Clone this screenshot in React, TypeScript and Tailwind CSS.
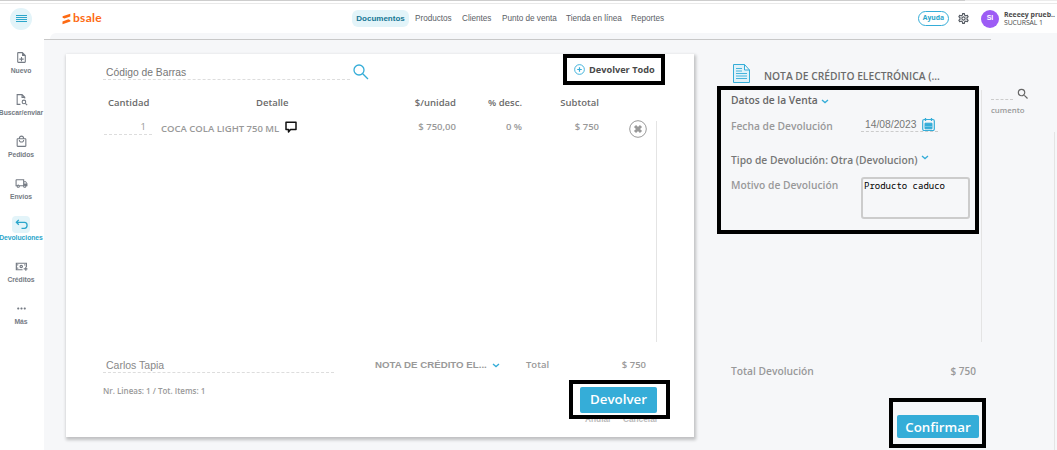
// src/pages/returns/ReturnView.tsx
import React, { useState } from 'react';
import { MdOutlineNoteAdd, MdOutlineLocalMall, MdOutlineLocalShipping, MdMoreHoriz, MdOutlineSettings, MdSearch } from 'react-icons/md';

const iconCls = 'w-[13px] h-[13px]';

function DocSearchIcon() {
  return (
    <svg viewBox="0 0 24 24" className={iconCls} fill="none" stroke="currentColor" strokeWidth="2">
      <path d="M10 21H4V3h9l5 5v2M13 3v5h5" />
      <circle cx="16.5" cy="16.5" r="3.3" />
      <path d="M19 19l3.5 3.5" />
    </svg>
  );
}

function UndoIcon() {
  return (
    <svg viewBox="0 0 24 24" className={iconCls} fill="none" stroke="currentColor" strokeWidth="2.4">
      <path d="M7 3.500L2.500 8L7 12.500M3 8h14.500a4.800 5.500 0 0 1 0 11H12" />
    </svg>
  );
}

function CreditIcon() {
  return (
    <svg viewBox="0 0 24 24" className={iconCls} fill="none" stroke="currentColor" strokeWidth="2.2">
      <path d="M14 18H2.500V6H21v7" />
      <circle cx="11.500" cy="12" r="2.200" />
      <path d="M4 9h2M4 15h2M17 9h2M16 16.500h7M20 13v7" />
    </svg>
  );
}

function Chevron({ className = '' }: { className?: string }) {
  return (
    <svg viewBox="0 0 8 5" className={`w-[8px] h-[5px] shrink-0 ${className}`} fill="none" stroke="#35add8" strokeWidth="1.3">
      <path d="M1 1l3 2.600L7 1" />
    </svg>
  );
}

const menu = [
  { label: 'Nuevo', icon: <MdOutlineNoteAdd className={iconCls} /> },
  { label: 'Buscar/enviar', icon: <DocSearchIcon /> },
  { label: 'Pedidos', icon: <MdOutlineLocalMall className={iconCls} /> },
  { label: 'Envíos', icon: <MdOutlineLocalShipping className={iconCls} /> },
  { label: 'Devoluciones', icon: <UndoIcon />, active: true },
  { label: 'Créditos', icon: <CreditIcon /> },
  { label: 'Más', icon: <MdMoreHoriz className={iconCls} /> },
];

const tabs = [
  { label: 'Productos', cls: 'w-[47px]' },
  { label: 'Clientes', cls: 'w-[40px]' },
  { label: 'Punto de venta', cls: 'w-[64px]' },
  { label: 'Tienda en línea', cls: 'w-[65px]' },
  { label: 'Reportes', cls: 'w-[40px]' },
];

function TopBar() {
  return (
    <header className="h-[33px] shrink-0 bg-white flex flex-col">
      <div className="h-px flex shrink-0">
        <div className="w-[965px] bg-[#cdcdcd]" />
        <div className="flex-1 bg-[#ececec]" />
      </div>
      <div className="h-[3px] shrink-0 border-b border-[#e9e9e9]" />
      <div className="h-[29px] flex items-center">
        <button className="ml-[10px] w-[22px] h-[22px] rounded-full bg-[#e3f4f9] flex flex-col items-center justify-center gap-px">
          <i className="w-[11px] h-px bg-[#2ba6cb]" />
          <i className="w-[11px] h-px bg-[#2ba6cb]" />
          <i className="w-[11px] h-px bg-[#2ba6cb]" />
          <i className="w-[11px] h-px bg-[#2ba6cb]" />
        </button>
        <div className="ml-[30px] w-[42px] flex items-center text-[#fd6a13]">
          <svg viewBox="0 0 9 12" className="w-[9px] h-[12px] shrink-0" fill="currentColor">
            <path d="M8.300 0.800v2.600L2.500 5.600L0.600 4.700V3.300zM0.500 11.200V8.600l5.900-2.300l2 .9v1.400z" />
          </svg>
          <span className="ml-[2px] -mt-px font-[Lato] font-bold text-[12px] leading-[12px] tracking-[0.3px]">bsale</span>
        </div>
        <nav className="ml-[248px] flex items-center text-[8.200px] text-[#5b6066] whitespace-nowrap">
          <a className="w-[57px] h-[17px] rounded-[6px] bg-[#e3f4f9] text-[#147694] font-bold text-[8px] flex items-center justify-center">Documentos</a>
          <div className="flex pl-[6px] pt-[2px] tracking-[-0.02px]">
            {tabs.map(tab => <a key={tab.label} className={`${tab.cls} shrink-0`}>{tab.label}</a>)}
          </div>
        </nav>
        <div className="ml-auto flex items-center w-[139px] shrink-0">
          <button className="w-[31px] h-[15px] rounded-full border border-[#35add8] text-[#2ba6cb] font-['Open_Sans'] font-bold text-[6.800px] leading-none">Ayuda</button>
          <MdOutlineSettings className="ml-[8px] w-[13px] h-[13px] text-[#50565e]" />
          <div className="ml-[11px] w-[18px] h-[18px] rounded-full bg-[#9d5cf5] text-white font-bold text-[7px] flex items-center justify-center">SI</div>
          <div className="ml-[5px] font-['Open_Sans'] text-[6.900px] leading-[8px] text-[#4b4b4b] whitespace-nowrap">
            <p className="font-bold">Reeeey prueb..</p>
            <p className="tracking-[-0.1px]">SUCURSAL 1</p>
          </div>
        </div>
      </div>
    </header>
  );
}

function SideMenu() {
  return (
    <aside className="w-[44px] shrink-0 bg-white pt-[16px] flex flex-col">
      {menu.map(item => (
        <div key={item.label} className={`h-[41.850px] w-[42px] shrink-0 flex flex-col items-center ${item.active ? 'text-[#2ba6cb]' : 'text-[#757b84]'}`}>
          <div className={`w-[18px] h-[17px] rounded-[4px] flex items-center justify-center ${item.active ? 'bg-[#e3f4f9]' : ''}`}>{item.icon}</div>
          <span className="mt-px text-[6.8px] leading-[8px] font-bold whitespace-nowrap tracking-[-0.05px]">{item.label}</span>
        </div>
      ))}
    </aside>
  );
}

function ReturnCard() {
  const [search, setSearch] = useState('Código de Barras');

  return (
    <section className="ml-[22px] mt-[14px] w-[628px] h-[383px] shrink-0 bg-white shadow-[1px_2px_3px_1px_rgba(0,0,0,0.22)] flex flex-col font-['Open_Sans'] font-semibold text-[#999] whitespace-nowrap">
      {/* búsqueda */}
      <div className="h-[31px] shrink-0 flex items-start pl-[37px]">
        <input value={search} onChange={e => setSearch(e.target.value)}
          className="mt-[10px] w-[247px] h-[16px] pt-px pl-[3px] border-b border-dashed border-[#ddd] font-['Liberation_Sans'] font-normal text-[10.3px] text-[#777] outline-none" />
        <svg viewBox="0 0 16 16" className="ml-[3px] mt-[10px] w-[16px] h-[16px]" fill="none" stroke="#35add8" strokeWidth="1.300">
          <circle cx="6" cy="6" r="5" />
          <path d="M9.700 9.700L15 15" />
        </svg>
        <button className="ml-[194px] w-[102px] h-[31px] border-[4px] border-black flex items-center pl-[7px] text-[#4a4a4a] font-['Open_Sans'] font-bold text-[9.2px]">
          <svg viewBox="0 0 12 12" className="w-[11px] h-[11px] mr-[4px] shrink-0" fill="none" stroke="#35add8">
            <circle cx="6" cy="6" r="5.300" />
            <path d="M6 3.500v5M3.500 6h5" strokeWidth="1.300" />
          </svg>
          Devolver Todo
        </button>
      </div>

      {/* tabla */}
      <div className="h-[36px] shrink-0 flex items-center pl-[42px] pt-px text-[9.5px] text-[#6b6b6b]">
        <span className="w-[148px]">Cantidad</span>
        <span className="w-[100px]">Detalle</span>
        <span className="w-[100px] text-right">$/unidad</span>
        <span className="w-[66px] text-right">% desc.</span>
        <span className="w-[77px] text-right">Subtotal</span>
      </div>
      <div className="h-[221px] w-[591px] border-r border-[#e4e4e4] shrink-0 flex items-start pl-[38px] text-[9.5px] leading-[11px]">
        <span className="w-[48px] h-[14px] pr-[6px] text-right font-normal border-b border-dashed border-[#ddd]">1</span>
        <span className="ml-[9px] mt-[2px] w-[119px] text-[9.5px]">COCA COLA LIGHT 750 ML</span>
        <svg viewBox="0 0 12 12" className="ml-[5px] w-[12px] h-[12px]" fill="none" stroke="#111" strokeWidth="1.500">
          <path d="M1 1.300h10v7.200H5.500L3.500 11V8.500H1z" strokeLinejoin="round" />
        </svg>
        <span className="w-[159px] text-right">$ 750,00</span>
        <span className="w-[66px] text-right">0 %</span>
        <span className="w-[77px] text-right">$ 750</span>
        <svg viewBox="0 0 18 18" className="ml-[30px] -mt-px w-[18px] h-[18px]" fill="none" stroke="#999">
          <circle cx="9" cy="9" r="8.300" />
          <path d="M6 6l6 6M12 6l-6 6" strokeWidth="3" />
        </svg>
      </div>

      {/* pie */}
      <div className="h-[39px] shrink-0 flex items-end pb-[8px] pl-[37px] text-[9.5px] leading-[15px]">
        <span className="w-[231px] h-[16px] pl-[3px] pt-px border-b border-dashed border-[#ddd] font-['Liberation_Sans'] font-normal text-[10.500px] text-[#888]">Carlos Tapia</span>
        <span className="ml-[41px] mb-px w-[117px] font-['Liberation_Sans'] font-bold text-[9.700px]">NOTA DE CRÉDITO EL...</span>
        <Chevron className="mb-[5px]" />
        <span className="ml-[26px] mb-px">Total</span>
        <span className="ml-auto mr-[48px] mb-px">$ 750</span>
      </div>
      <div className="flex justify-between pl-[37px] pr-[24px]">
        <p className="mt-[4px] text-[8px] leading-[12px]">Nr. Lineas: 1 / Tot. Items: 1</p>
        <div className="w-[101px] flex flex-col">
          <div className="relative z-10 -mt-px w-[101px] h-[39px] border-[4px] border-black bg-white pt-[2px] pl-[7px]">
            <button className="w-[77px] h-[26px] rounded-[2px] bg-[#35add8] text-white font-semibold text-[13.300px] leading-[25px]">Devolver</button>
          </div>
          <div className="-mt-[5px] flex justify-between pl-[16px] pr-[12px] font-['Liberation_Sans'] font-bold text-[8.300px] leading-[11px] text-[#bbb]">
            <span>Anular</span>
            <span>Cancelar</span>
          </div>
        </div>
      </div>
    </section>
  );
}

function CreditNotePanel() {
  const [reason, setReason] = useState('Producto caduco');

  return (
    <section className="ml-[23px] w-[262px] shrink-0 flex flex-col font-['Open_Sans'] font-semibold text-[10.250px] text-[#999] whitespace-nowrap">
      <div className="mt-[23px] h-[23px] shrink-0 flex items-center pl-[16px] text-[#6b6b6b]">
        <svg viewBox="0 0 17 19" className="w-[17px] h-[19px] -mt-[2px]" fill="#e1f2f9" stroke="#35add8">
          <path d="M.5.500h11L16.500 6v12.500H.5zM11.500.500V6h5" />
          <path d="M3 4.500h6M3 7h6M3 9.500h11M3 12h11M3 14.500h11" strokeWidth=".9" />
        </svg>
        <span className="ml-[14px] mt-[4px]">NOTA DE CRÉDITO ELECTRÓNICA (...</span>
      </div>

      <div className="w-[262px] h-[148px] shrink-0 border-[4px] border-black pl-[10px] flex flex-col">
        <div className="h-[21px] pt-px flex items-center text-[#666]">
          Datos de la Venta <Chevron className="ml-[3px] mt-px" />
        </div>
        <div className="h-[22px] mt-[2px] flex items-start">
          <span className="w-[130px] mt-[6px]">Fecha de Devolución</span>
          <div className="w-[77px] h-[19px] flex items-center pl-[4px] pt-[5px] border-b border-dashed border-[#ccc] font-['Liberation_Sans'] font-normal text-[10.300px] text-[#777]">
            14/08/2023
            <svg viewBox="0 0 13 13" className="ml-[5px] w-[13px] h-[13px] shrink-0" fill="none" stroke="#35add8">
              <rect x=".7" y="1.500" width="11.600" height="11" rx="1.500" strokeWidth="1.200" />
              <path d="M3.500 0v3M9.500 0v3" strokeWidth="1.300" />
              <path d="M3 5.200h7v5.600H3z" fill="#35add8" />
              <path d="M3 8.500h7" stroke="#9bd6ec" strokeWidth=".6" />
            </svg>
          </div>
        </div>
        <div className="mt-[15px] h-[20px] pt-px flex items-center text-[#777]">
          Tipo de Devolución: Otra (Devolucion) <Chevron className="ml-[3px] mb-[6px]" />
        </div>
        <div className="mt-[7px] flex items-start">
          <span className="w-[130px] mt-px">Motivo de Devolución</span>
          <textarea value={reason} onChange={e => setReason(e.target.value)}
            className="w-[109px] h-[42px] resize-none border-2 border-[#ccc] rounded-[3px] px-[1px] font-['Noto_Sans_Mono','DejaVu_Sans_Mono'] font-normal text-[9px] leading-[13px] text-black outline-none" />
        </div>
      </div>

      <div className="mt-[129px] flex justify-between pl-[14px] pr-[3px] text-[10px] leading-[16px]">
        <span className="text-[10.250px]">Total Devolución</span>
        <span>$ 750</span>
      </div>
      <div className="mt-[19px] ml-[172px] w-[97px] h-[50px] shrink-0 border-[4px] border-black pt-[13px] pl-[4px]">
        <button className="w-[82px] h-[23px] rounded-[2px] bg-[#35add8] text-white font-semibold text-[13.300px] leading-[22px]">Confirmar</button>
      </div>
    </section>
  );
}

export default function App() {
  return (
    <div className="w-[1057px] h-[450px] overflow-hidden bg-white flex flex-col font-['Liberation_Sans',sans-serif]">
      <TopBar />
      <div className="flex-1 min-h-0 flex">
        <SideMenu />
        <main className="w-[947px] shrink-0 flex flex-col">
          <div className="h-[6px] shrink-0 pl-[6px]">
            <div className="h-full bg-[#f6f7f9] rounded-tl-[10px]" />
          </div>
          <div className="flex-1 min-h-0 border-t border-[#c8c8c8] bg-[#f6f7f9] flex items-start">
            <ReturnCard />
            <CreditNotePanel />
            <div className="ml-[2px] mt-[50px] w-px h-[252px] bg-[#e4e4e4]" />
          </div>
        </main>
        {/* listado de fondo, queda tapado por el modal */}
        <div className="flex-1 bg-[#f6f7f9] flex flex-col pt-[53px] overflow-hidden">
          <div className="flex items-start">
            <div className="w-[22px] h-[14px] border-b border-dashed border-[#ccc]" />
            <MdSearch className="ml-[3px] mt-px w-[14px] h-[14px] text-[#666]" />
          </div>
          <span className="mt-[4px] font-['Open_Sans'] font-semibold text-[7.800px] leading-[10px] text-[#999]">cumento</span>
          <div className="mt-[17px] w-[64px] flex-1 border-r border-[#e4e4e4]" />
        </div>
      </div>
    </div>
  );
}
